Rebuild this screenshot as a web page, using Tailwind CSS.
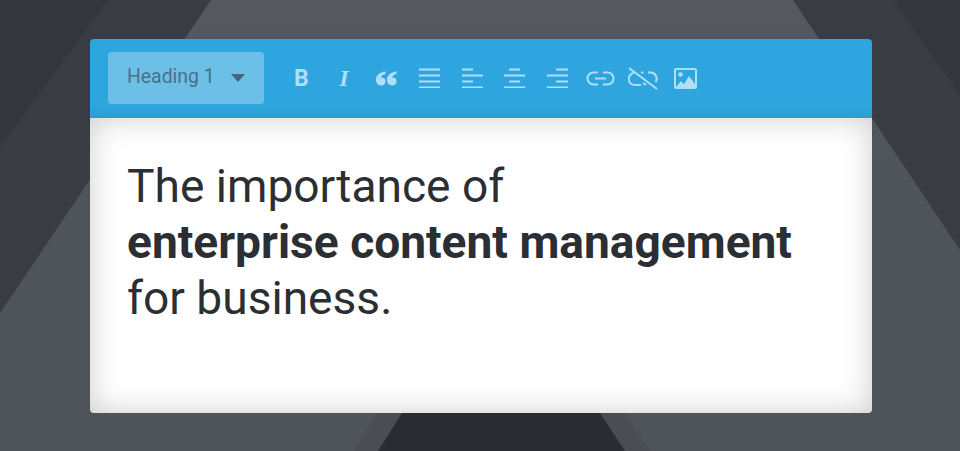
<!DOCTYPE html>
<html lang="en">
<head>
  <meta charset="UTF-8" />
  <title>Editor</title>
  <script src="https://cdn.jsdelivr.net/npm/@tailwindcss/browser@4"></script>
</head>
<body class="relative w-[960px] h-[451px] overflow-hidden bg-[#4f535a] font-['Roboto',sans-serif]">
  <!-- Background shapes -->
  <svg class="absolute inset-0" width="960" height="451" viewBox="0 0 960 451">
    <defs>
      <linearGradient id="top" x1="0" y1="0" x2="0" y2="1">
        <stop offset="0" stop-color="#55585e" />
        <stop offset="1" stop-color="#4f535a" />
      </linearGradient>
    </defs>
    <rect width="960" height="200" fill="url(#top)" />
    <polygon points="0,0 211,0 0,313" fill="#393c42" />
    <polygon points="0,0 108,0 0,147" fill="#33363b" />
    <polygon points="793,0 960,0 960,250" fill="#393c42" />
    <polygon points="893,0 960,0 960,95" fill="#33363b" />
    <polygon points="377,413 624,413 650,451 354,451" fill="#4a4e54" />
    <polygon points="402,413 600,413 625,451 378,451" fill="#2a2c32" />
  </svg>

  <!-- Editor -->
  <div class="relative ml-[90px] mt-[39px] w-[782px] h-[374px] rounded-[4px] overflow-hidden flex flex-col">
    <div class="h-[79px] bg-linear-to-b from-[#2ea5de] from-85% to-[#2b9dd6] flex items-center pl-[18px] pb-[1px]">
      <div class="w-[156px] h-[52px] rounded-[4px] bg-[#6cc0e8] flex items-center pl-[19px]">
        <span class="text-[19.4px] text-[#47708c] leading-none pb-[2px]">Heading 1</span>
        <svg class="ml-[16px]" width="14" height="8" viewBox="0 0 14 8"><polygon points="0,0 14,0 7,8" fill="#47647c" /></svg>
      </div>
      <div class="flex ml-[16px] text-[#aedff7]">
        <div class="w-[42.7px] h-[30px] flex items-center justify-center text-[23px] font-bold leading-none">B</div>
        <div class="w-[42.7px] h-[30px] flex items-center justify-center text-[24px] font-bold italic font-['Liberation_Serif',serif] leading-none">I</div>
        <div class="w-[42.7px] h-[30px] flex items-center justify-center">
          <svg width="21" height="15" viewBox="0 0 21 15" fill="currentColor"><path d="M9.500.5v2.600C6.800 3.600 5.400 5 5.200 6.600 7.700 6.200 9.600 7.800 9.600 10.200c0 2.400-1.800 4.200-4.400 4.200C2 14.400 0 12 0 9 0 4.500 3.500 1 9.500.5zM20.500.5v2.600C17.800 3.600 16.400 5 16.200 6.600c2.500-.4 4.400 1.200 4.400 3.600 0 2.400-1.800 4.200-4.400 4.200C13 14.400 11 12 11 9c0-4.500 3.500-8 9.500-8.500z"/></svg>
        </div>
        <div class="w-[42.7px] h-[30px] flex items-center justify-center">
          <svg width="21" height="20" viewBox="0 0 21 20" stroke="currentColor" stroke-width="1.800"><path d="M0 1.500h21M0 7.500h21M0 13.500h21M0 19.500h21"/></svg>
        </div>
        <div class="w-[42.7px] h-[30px] flex items-center justify-center">
          <svg width="21" height="20" viewBox="0 0 21 20" stroke="currentColor" stroke-width="1.800"><path d="M0 1.500h11M0 7.500h21M0 13.500h11M0 19.500h21"/></svg>
        </div>
        <div class="w-[42.7px] h-[30px] flex items-center justify-center">
          <svg width="21" height="20" viewBox="0 0 21 20" stroke="currentColor" stroke-width="1.800"><path d="M5 1.500h11M0 7.500h21M5 13.500h11M0 19.500h21"/></svg>
        </div>
        <div class="w-[42.7px] h-[30px] flex items-center justify-center">
          <svg width="21" height="20" viewBox="0 0 21 20" stroke="currentColor" stroke-width="1.800"><path d="M9 1.500h12M0 7.500h21M9 13.500h12M0 19.500h21"/></svg>
        </div>
        <div class="w-[42.7px] h-[30px] flex items-center justify-center">
          <svg width="29" height="15" viewBox="0 0 29 15" fill="none" stroke="currentColor" stroke-width="2"><path d="M12 1.500H7.500a6 6 0 0 0 0 12H12M17 1.500h4.500a6 6 0 0 1 0 12H17M9 7.500h11"/></svg>
        </div>
        <div class="w-[42.7px] h-[30px] flex items-center justify-center">
          <svg width="30" height="23" viewBox="0 0 30 23" fill="none" stroke="currentColor" stroke-width="2"><path d="M1 1l28 21M6 6a6 6 0 0 0 1.500 12H13M13 5.500h2.500M20 5.500h2.500a6 6 0 0 1 5 9.500M18 18l-3-2"/></svg>
        </div>
        <div class="w-[42.7px] h-[30px] flex items-center justify-center">
          <svg width="23" height="21" viewBox="0 0 23 21"><rect x="1" y="1" width="21" height="19" rx="1.500" fill="none" stroke="currentColor" stroke-width="2"/><circle cx="6.500" cy="6.500" r="2.200" fill="currentColor"/><path d="M2 19l5-6 3 3 5-8 6 8v3z" fill="currentColor"/></svg>
        </div>
      </div>
    </div>
    <div class="flex-1 bg-white shadow-[inset_0_0_30px_rgba(0,0,0,0.2)] pl-[37px] pt-[40px] text-[46.1px] leading-[56px] text-[#2b2e33]">
      <p>The importance of<br /><strong class="font-bold">enterprise content management</strong><br />for business.</p>
    </div>
  </div>
</body>
</html>
